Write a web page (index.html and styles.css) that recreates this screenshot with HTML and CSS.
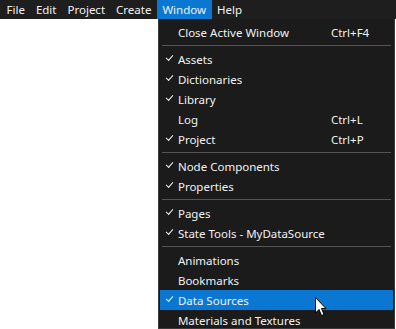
FILE: index.html
```html
<!DOCTYPE html>
<html>
<head>
<meta charset="utf-8">
<link rel="stylesheet" href="styles.css">
</head>
<body>
<nav class="menubar">
  <div class="top-item">File</div>
  <div class="top-item">Edit</div>
  <div class="top-item">Project</div>
  <div class="top-item">Create</div>
  <div class="top-item open">Window
    <div class="dropdown">
      <div class="row"><span class="check"></span><span class="label">Close Active Window</span><span class="key">Ctrl+F4</span></div>
      <div class="sep"></div>
      <div class="row checked"><span class="check"></span><span class="label">Assets</span><span class="key"></span></div>
      <div class="row checked"><span class="check"></span><span class="label">Dictionaries</span><span class="key"></span></div>
      <div class="row checked"><span class="check"></span><span class="label">Library</span><span class="key"></span></div>
      <div class="row"><span class="check"></span><span class="label">Log</span><span class="key">Ctrl+L</span></div>
      <div class="row checked"><span class="check"></span><span class="label">Project</span><span class="key">Ctrl+P</span></div>
      <div class="sep"></div>
      <div class="row checked"><span class="check"></span><span class="label">Node Components</span><span class="key"></span></div>
      <div class="row checked"><span class="check"></span><span class="label">Properties</span><span class="key"></span></div>
      <div class="sep"></div>
      <div class="row checked"><span class="check"></span><span class="label">Pages</span><span class="key"></span></div>
      <div class="row checked"><span class="check"></span><span class="label">State Tools - MyDataSource</span><span class="key"></span></div>
      <div class="sep"></div>
      <div class="row"><span class="check"></span><span class="label">Animations</span><span class="key"></span></div>
      <div class="row"><span class="check"></span><span class="label">Bookmarks</span><span class="key"></span></div>
      <div class="row checked active"><span class="check"></span><span class="label">Data Sources</span><span class="key"></span>
        <svg class="cursor" width="14" height="22" viewBox="0 0 14 22"><path d="M1.5 1.5 L1.5 17 L5 13.5 L7.5 19.5 L10 18.5 L7.5 12.5 L12 12.5 Z" fill="#fff" stroke="#000" stroke-width="1" stroke-linejoin="miter"/></svg>
      </div>
      <div class="row"><span class="check"></span><span class="label">Materials and Textures</span><span class="key"></span></div>
    </div>
  </div>
  <div class="top-item">Help</div>
</nav>
</body>
</html>
```

FILE: styles.css
```css
html, body {
  margin: 0;
  padding: 0;
  background: #ffffff;
  height: 100%;
  overflow: hidden;
}
body {
  font-family: "Segoe UI", "Noto Sans", "Open Sans", sans-serif;
  font-size: 11.5px;
  color: #f2f2f2;
}
.menubar {
  display: flex;
  height: 19px;
  background: #1e1e1e;
  padding-left: 1px;
}
.top-item {
  padding: 0 5.5px;
  line-height: 19px;
  height: 19px;
  white-space: nowrap;
}
.top-item.open {
  background: #0a78d2;
  position: relative;
}
.dropdown {
  position: absolute;
  left: 1px;
  top: 19px;
  width: 237px;
  box-sizing: border-box;
  height: 310px;
  overflow: hidden;
  background: #1b1b1b;
  border: 1px solid #3a3a3a;
  border-top: none;
  padding: 3px 1px 0 1px;
}
.row {
  display: flex;
  align-items: center;
  height: 20px;
  position: relative;
}
.row.active {
  background: #0a78d2;
}
.check {
  width: 18px;
  flex: none;
  position: relative;
  height: 20px;
}
.row.checked .check::after {
  content: "";
  position: absolute;
  left: 6px;
  top: 6px;
  width: 6px;
  height: 3px;
  border-left: 1.5px solid #f2f2f2;
  border-bottom: 1.5px solid #f2f2f2;
  transform: rotate(-48deg);
}
.label {
  flex: 1;
  white-space: nowrap;
}
.key {
  width: 62px;
  flex: none;
}
.sep {
  height: 7px;
  position: relative;
}
.sep::after {
  content: "";
  position: absolute;
  left: 2px;
  right: 2px;
  top: 3px;
  height: 1px;
  background: #555555;
}
.cursor {
  position: absolute;
  left: 154px;
  top: 6px;
}
```
